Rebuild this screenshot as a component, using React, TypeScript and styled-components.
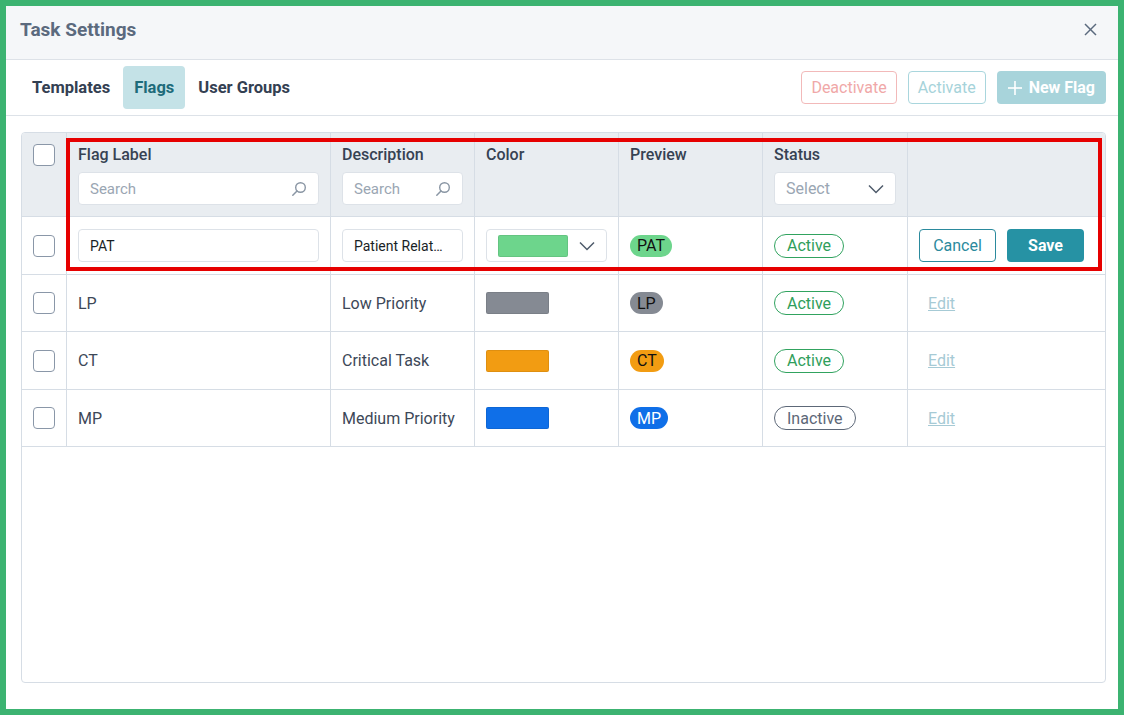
import React from "react";
import styled, { createGlobalStyle } from "styled-components";

const Global = createGlobalStyle`
  html, body { margin: 0; padding: 0; background: #ffffff; }
  body { font-family: Roboto, "Liberation Sans", Arial, sans-serif; }
  * { box-sizing: border-box; }
`;

const Frame = styled.div`
  position: relative;
  width: 1124px;
  height: 715px;
  border: 6px solid #3cb371;
  background: #ffffff;
  display: flex;
  flex-direction: column;
`;

const Header = styled.div`
  height: 54px;
  background: #f5f7f9;
  border-bottom: 1px solid #dde2e8;
  display: flex;
  align-items: center;
  justify-content: space-between;
  padding: 0 21px 6px 14px;
`;

const Title = styled.div`
  font-size: 19px;
  font-weight: 700;
  color: #5b6a7e;
  line-height: 22px;
`;

const CloseBtn = styled.button`
  border: none;
  background: transparent;
  padding: 0;
  display: flex;
  align-items: center;
  cursor: pointer;
`;

const TabBar = styled.div`
  height: 56px;
  border-bottom: 1px solid #dde2e8;
  display: flex;
  align-items: center;
  justify-content: space-between;
  padding: 0 12px 0 15px;
`;

const Tabs = styled.div`
  display: flex;
  align-items: center;
  gap: 2px;
`;

const Tab = styled.div<{ $active?: boolean }>`
  height: 43px;
  display: flex;
  align-items: center;
  padding: 0 11px;
  border-radius: 4px;
  font-size: 16.5px;
  font-weight: 700;
  color: ${(p) => (p.$active ? "#1d6b7a" : "#334052")};
  background: ${(p) => (p.$active ? "#c4e2e7" : "transparent")};
`;

const Actions = styled.div`
  display: flex;
  align-items: center;
  gap: 11px;
`;

const OutlineBtn = styled.button<{ $tone: "red" | "teal" }>`
  height: 33px;
  padding: 0 9px;
  border-radius: 4px;
  background: #ffffff;
  font-family: inherit;
  font-size: 16px;
  border: 1px solid ${(p) => (p.$tone === "red" ? "#f2b9b9" : "#a9d6dd")};
  color: ${(p) => (p.$tone === "red" ? "#f0a8a8" : "#a6d3da")};
`;

const FilledBtn = styled.button`
  height: 33px;
  padding: 0 11px 0 10px;
  border-radius: 4px;
  border: none;
  background: #a8d4db;
  color: #ffffff;
  font-family: inherit;
  font-size: 16px;
  font-weight: 700;
  display: flex;
  align-items: center;
  gap: 6px;
`;

const TableWrap = styled.div`
  flex: 1;
  margin: 16px 12px 26px 15px;
  border: 1px solid #d6dde5;
  border-radius: 4px;
  overflow: hidden;
`;

const cols = "45px 264px 144px 144px 144px 145px 1fr";

const HeadRow = styled.div`
  display: grid;
  grid-template-columns: ${cols};
  background: #e9edf1;
  border-bottom: 1px solid #d6dde5;
  height: 84px;
`;

const Row = styled.div`
  display: grid;
  grid-template-columns: ${cols};
  border-bottom: 1px solid #d6dde5;
  height: 58px;
  &:nth-of-type(odd) { height: 57px; }
`;

const HeadCell = styled.div<{ $center?: boolean }>`
  border-right: 1px solid #d6dde5;
  padding: 12px 11px 11px;
  display: flex;
  flex-direction: column;
  gap: 7px;
  align-items: ${(p) => (p.$center ? "center" : "stretch")};
  &:last-child { border-right: none; }
`;

const HeadLabel = styled.div`
  font-size: 16px;
  font-weight: 500;
  color: #364253;
  line-height: 20px;
  height: 20px;
`;

const Cell = styled.div<{ $center?: boolean }>`
  border-right: 1px solid #d6dde5;
  padding: 0 11px;
  display: flex;
  align-items: center;
  justify-content: ${(p) => (p.$center ? "center" : "flex-start")};
  font-size: 16px;
  color: #3d4858;
  gap: 11px;
  &:last-child { border-right: none; }
`;

const Checkbox = styled.div`
  width: 22px;
  height: 22px;
  border: 1.5px solid #8a97a8;
  border-radius: 4px;
  background: #ffffff;
`;

const HeadCheckWrap = styled.div`
  margin-top: -1px;
`;

const Field = styled.div<{ $padR?: number }>`
  height: 33px;
  width: 100%;
  border: 1px solid #dde2e8;
  border-radius: 4px;
  background: #ffffff;
  display: flex;
  align-items: center;
  justify-content: space-between;
  padding: 0 ${(p) => p.$padR ?? 11}px 0 11px;
  overflow: hidden;
`;

const Placeholder = styled.span<{ $size?: number }>`
  font-size: ${(p) => p.$size ?? 15}px;
  color: #9aa6b3;
`;

const Value = styled.span`
  font-size: 14px;
  color: #1a1f26;
  white-space: nowrap;
  overflow: hidden;
  text-overflow: ellipsis;
`;

const Swatch = styled.div<{ $color: string; $w: number }>`
  width: ${(p) => p.$w}px;
  height: 22px;
  border-radius: 2px;
  background: ${(p) => p.$color};
  border: 1px solid rgba(0, 0, 0, 0.08);
`;

const Badge = styled.span<{ $bg: string; $fg: string }>`
  height: 22px;
  display: inline-flex;
  align-items: center;
  padding: 0 7px;
  border-radius: 11px;
  background: ${(p) => p.$bg};
  color: ${(p) => p.$fg};
  font-size: 16px;
`;

const StatusPill = styled.span<{ $active: boolean }>`
  height: 24px;
  display: inline-flex;
  align-items: center;
  padding: 0 12px;
  border-radius: 12px;
  border: 1px solid ${(p) => (p.$active ? "#31a35f" : "#5d6878")};
  color: ${(p) => (p.$active ? "#2f9e5b" : "#5d6878")};
  font-size: 16px;
`;

const CancelBtn = styled.button`
  width: 77px;
  height: 33px;
  border-radius: 4px;
  border: 1px solid #2b8a9d;
  background: #ffffff;
  color: #2b8a9d;
  font-family: inherit;
  font-size: 16px;
`;

const SaveBtn = styled.button`
  width: 77px;
  height: 33px;
  border-radius: 4px;
  border: none;
  background: #2692a4;
  color: #ffffff;
  font-family: inherit;
  font-size: 16px;
  font-weight: 700;
`;

const EditLink = styled.a`
  font-size: 16px;
  color: #a6cad5;
  text-decoration: underline;
  margin-left: 9px;
`;

const Highlight = styled.div`
  position: absolute;
  left: 60px;
  top: 132px;
  width: 1036px;
  height: 133px;
  border: 4px solid #e60000;
  pointer-events: none;
`;

const SearchIcon = () => (
  <svg width="16" height="16" viewBox="0 0 16 16" fill="none">
    <circle cx="9.5" cy="6.5" r="4.8" stroke="#8a96a4" strokeWidth="1.4" />
    <line x1="6" y1="10" x2="1.8" y2="14.2" stroke="#8a96a4" strokeWidth="1.5" strokeLinecap="round" />
  </svg>
);

const Chevron = () => (
  <svg width="16" height="10" viewBox="0 0 16 10" fill="none">
    <polyline points="1,1.5 8,8.5 15,1.5" stroke="#4f5b6b" strokeWidth="1.5" fill="none" />
  </svg>
);

const CloseIcon = () => (
  <svg width="13" height="13" viewBox="0 0 13 13" fill="none">
    <line x1="1" y1="1" x2="12" y2="12" stroke="#5b6a7e" strokeWidth="1.5" />
    <line x1="12" y1="1" x2="1" y2="12" stroke="#5b6a7e" strokeWidth="1.5" />
  </svg>
);

const PlusIcon = () => (
  <svg width="16" height="16" viewBox="0 0 16 16" fill="none">
    <line x1="8" y1="1" x2="8" y2="15" stroke="#ffffff" strokeWidth="1.6" />
    <line x1="1" y1="8" x2="15" y2="8" stroke="#ffffff" strokeWidth="1.6" />
  </svg>
);

type Flag = { label: string; desc: string; color: string; fg: string; active: boolean };

const flags: Flag[] = [
  { label: "LP", desc: "Low Priority", color: "#858a93", fg: "#111111", active: true },
  { label: "CT", desc: "Critical Task", color: "#f29c12", fg: "#111111", active: true },
  { label: "MP", desc: "Medium Priority", color: "#0f6fe8", fg: "#ffffff", active: false },
];

export default function App() {
  return (
    <>
      <Global />
      <Frame>
        <Header>
          <Title>Task Settings</Title>
          <CloseBtn aria-label="Close">
            <CloseIcon />
          </CloseBtn>
        </Header>
        <TabBar>
          <Tabs>
            <Tab>Templates</Tab>
            <Tab $active>Flags</Tab>
            <Tab>User Groups</Tab>
          </Tabs>
          <Actions>
            <OutlineBtn $tone="red">Deactivate</OutlineBtn>
            <OutlineBtn $tone="teal">Activate</OutlineBtn>
            <FilledBtn>
              <PlusIcon />
              New Flag
            </FilledBtn>
          </Actions>
        </TabBar>
        <TableWrap>
          <HeadRow>
            <HeadCell $center>
              <HeadCheckWrap>
                <Checkbox />
              </HeadCheckWrap>
            </HeadCell>
            <HeadCell>
              <HeadLabel>Flag Label</HeadLabel>
              <Field>
                <Placeholder>Search</Placeholder>
                <SearchIcon />
              </Field>
            </HeadCell>
            <HeadCell>
              <HeadLabel>Description</HeadLabel>
              <Field>
                <Placeholder>Search</Placeholder>
                <SearchIcon />
              </Field>
            </HeadCell>
            <HeadCell>
              <HeadLabel>Color</HeadLabel>
            </HeadCell>
            <HeadCell>
              <HeadLabel>Preview</HeadLabel>
            </HeadCell>
            <HeadCell>
              <HeadLabel>Status</HeadLabel>
              <Field>
                <Placeholder $size={16}>Select</Placeholder>
                <Chevron />
              </Field>
            </HeadCell>
            <HeadCell />
          </HeadRow>

          <Row>
            <Cell $center>
              <Checkbox />
            </Cell>
            <Cell>
              <Field>
                <Value>PAT</Value>
              </Field>
            </Cell>
            <Cell>
              <Field $padR={15}>
                <Value>Patient Related Task</Value>
              </Field>
            </Cell>
            <Cell>
              <Field>
                <Swatch $color="#6dd58c" $w={70} />
                <Chevron />
              </Field>
            </Cell>
            <Cell>
              <Badge $bg="#6dd58c" $fg="#111111">PAT</Badge>
            </Cell>
            <Cell>
              <StatusPill $active>Active</StatusPill>
            </Cell>
            <Cell>
              <CancelBtn>Cancel</CancelBtn>
              <SaveBtn>Save</SaveBtn>
            </Cell>
          </Row>

          {flags.map((f) => (
            <Row key={f.label}>
              <Cell $center>
                <Checkbox />
              </Cell>
              <Cell>{f.label}</Cell>
              <Cell>{f.desc}</Cell>
              <Cell>
                <Swatch $color={f.color} $w={63} />
              </Cell>
              <Cell>
                <Badge $bg={f.color} $fg={f.fg}>{f.label}</Badge>
              </Cell>
              <Cell>
                <StatusPill $active={f.active}>{f.active ? "Active" : "Inactive"}</StatusPill>
              </Cell>
              <Cell>
                <EditLink href="#">Edit</EditLink>
              </Cell>
            </Row>
          ))}
        </TableWrap>
        <Highlight />
      </Frame>
    </>
  );
}
